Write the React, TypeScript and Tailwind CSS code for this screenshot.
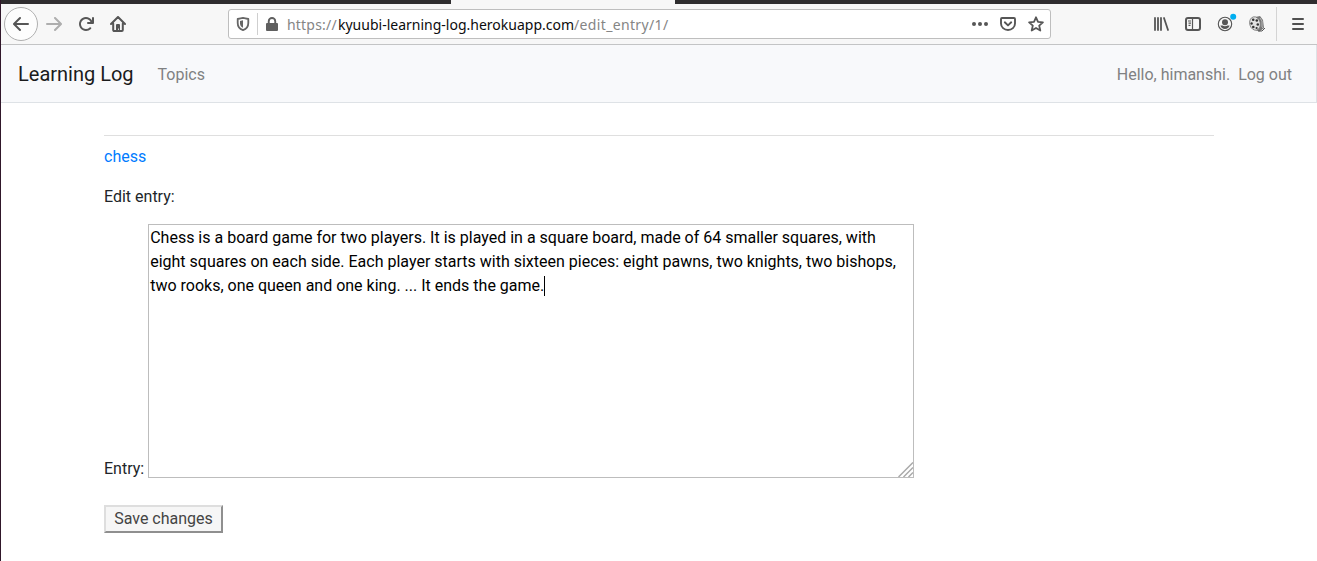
import type { ReactNode } from "react";

function Icon({ children, className = "" }: { children: ReactNode; className?: string }) {
  return (
    <svg viewBox="0 0 16 16" className={`size-4 shrink-0 fill-[#565656] ${className}`}>
      {children}
    </svg>
  );
}

const ARROW =
  "M15 7H3.414l4.293-4.293a1 1 0 0 0-1.414-1.414l-6 6a1 1 0 0 0 0 1.414l6 6a1 1 0 0 0 1.414-1.414L3.414 9H15a1 1 0 0 0 0-2z";

function AddressBar() {
  return (
    <div className="flex h-[30px] w-[823px] shrink-0 items-center rounded-[3px] border border-[#bebebe] bg-white">
      <Icon className="ml-[6px]">
        <path
          d="M8 1.9C6.2 2.2 4.400 2.600 2.700 3V7c0 3.700 2 6 5.300 7.200C11.300 13 13.300 10.700 13.300 7V3C11.600 2.600 9.800 2.200 8 1.900z"
          fill="none"
          stroke="#666"
          strokeWidth="1.800"
          strokeLinejoin="round"
        />
        <path d="M8 4.300 5 5v2.200c0 2 1 3.600 3 4.600z" fill="#666" />
      </Icon>
      <div className="ml-[6px] h-[22px] w-px bg-[#cfcfcf]" />
      <Icon className="ml-[6px]">
        <path
          fillRule="evenodd"
          fill="#5f5f5f"
          d="M3.800 7V5.200a4.200 4.200 0 0 1 8.400 0V7h.8a1 1 0 0 1 1 1v6a1 1 0 0 1-1 1H3a1 1 0 0 1-1-1V8a1 1 0 0 1 1-1zM5.700 7h4.600V5.200a2.300 2.300 0 0 0-4.600 0z"
        />
      </Icon>
      <div className="ml-[7px] flex whitespace-pre pt-[2px] font-['Noto_Sans','Open_Sans',sans-serif] text-[14px] leading-5 text-[#858585]">
        <span className="w-[51px] tracking-[0.2px]">https://</span>
        <span className="w-[236px] text-[#0c0c0d]">kyuubi-learning-log.herokuapp.com</span>
        <span className="tracking-[0.35px]">/edit_entry/1/</span>
      </div>
      <div className="mr-[6px] ml-auto flex gap-3">
        <Icon>
          <circle cx="2" cy="8" r="2" />
          <circle cx="8" cy="8" r="2" />
          <circle cx="14" cy="8" r="2" />
        </Icon>
        <Icon>
          <path
            d="M2 2h12a1 1 0 0 1 1 1v4.500a7 6.500 0 0 1-14 0V3a1 1 0 0 1 1-1zM4.800 6.300 8 9.400l3.200-3.100"
            fill="none"
            stroke="#565656"
            strokeWidth="1.900"
            strokeLinecap="round"
            strokeLinejoin="round"
          />
        </Icon>
        <Icon>
          <path
            d="m8 1.300 2 4.500 4.900.5-3.700 3.300 1.100 4.900L8 12l-4.300 2.500 1.100-4.900L1.100 6.300 6 5.800z"
            fill="none"
            stroke="#565656"
            strokeWidth="1.800"
            strokeLinejoin="round"
          />
        </Icon>
      </div>
    </div>
  );
}

function BrowserToolbar() {
  return (
    <>
      <div className="flex h-1 bg-[#2f2d2f]">
        <div className="ml-[450px] w-[224px] bg-[#f7f7f7]" />
      </div>
      <div className="flex h-[41px] items-center border-b border-[#c3c4c5] bg-[#f7f7f7]">
        <div className="ml-[3px] flex size-[34px] shrink-0 items-center justify-center rounded-full border border-[#b0b0b0] bg-[#fdfdfd]">
          <Icon><path d={ARROW} /></Icon>
        </div>
        <Icon className="ml-2 opacity-45">
          <path d={ARROW} transform="matrix(-1 0 0 1 16 0)" />
        </Icon>
        <Icon className="ml-4">
          <path d="M15 1a1 1 0 0 0-1 1v2.418A6.995 6.995 0 1 0 8 15a6.954 6.954 0 0 0 4.950-2.050 1 1 0 0 0-1.414-1.414A5.019 5.019 0 1 1 12.549 6H10a1 1 0 0 0 0 2h5a1 1 0 0 0 1-1V2a1 1 0 0 0-1-1z" />
        </Icon>
        <Icon className="ml-4">
          <path
            d="M1 8 8 1l7 7M3.200 7.500V14a1 1 0 0 0 1 1h7.600a1 1 0 0 0 1-1V7.500"
            fill="none"
            stroke="#565656"
            strokeWidth="2"
            strokeLinecap="round"
            strokeLinejoin="round"
          />
          <path d="M6 14.500V9a1 1 0 0 1 1-1h2a1 1 0 0 1 1 1v5.500H8.800v-2H8v2z" />
        </Icon>
        <div className="ml-[102px] flex">
          <AddressBar />
        </div>
        <div className="ml-[102px] flex items-center gap-4">
          <Icon>
            <path d="M2 2v12M5 2v12M8 2v12M11 2l4 12" fill="none" stroke="#565656" strokeWidth="1.800" strokeLinecap="round" />
          </Icon>
          <Icon>
            <rect x="1" y="2" width="14" height="12" rx="2" fill="none" stroke="#565656" strokeWidth="2" />
            <path d="M7.500 2v12M3 5h3M3.500 7.200H6M3.500 9.400H5.500" fill="none" stroke="#565656" strokeWidth="1.200" />
          </Icon>
          <svg viewBox="0 0 16 16" className="size-4 shrink-0 overflow-visible fill-[#565656]">
            <circle cx="8" cy="8" r="6.700" fill="none" stroke="#565656" strokeWidth="1.100" />
            <circle cx="8" cy="6.200" r="3" />
            <path d="M3.400 9.500h2.200q2.400 1.300 4.800 0h2.200c-.6 2.200-2.300 3.600-4.600 3.600s-4-1.400-4.600-3.600z" />
            <circle cx="16.200" cy="0.800" r="3" fill="#00aef0" />
          </svg>
          <Icon>
            <path d="M4 1.500 11 0l3 4 1 8-4.500 3.500-6-2z" fill="#777" />
            <ellipse cx="6" cy="7.500" rx="5.300" ry="6.800" fill="#e2e2e2" stroke="#777" strokeWidth="0.800" transform="rotate(-15 6 7.500)" />
            <g fill="#343434">
              <circle cx="4.200" cy="3.800" r="1.300" />
              <circle cx="7.800" cy="4.500" r="1.300" />
              <circle cx="2.600" cy="7.500" r="1.200" />
              <circle cx="8.800" cy="8.500" r="1.300" />
              <circle cx="4.300" cy="11" r="1.300" />
              <circle cx="7.600" cy="12" r="1.100" />
            </g>
            <path d="m11 2 2 3v6l2 2" fill="none" stroke="#bbb" />
            <path d="M9 15h4l3-3" fill="none" stroke="#555" />
          </Icon>
        </div>
        <div className="ml-[11px] h-[34px] w-px bg-[#d4d4d4]" />
        <Icon className="ml-[13px]">
          <path d="M3 3h10M3 8h10M3 13h10" stroke="#505050" strokeWidth="2" strokeLinecap="round" />
        </Icon>
      </div>
    </>
  );
}

const ENTRY_LINES = [
  "Chess is a board game for two players. It is played in a square board, made of 64 smaller squares, with",
  "eight squares on each side. Each player starts with sixteen pieces: eight pawns, two knights, two bishops,",
  "two rooks, one queen and one king. ... It ends the game.",
];

export default function App() {
  return (
    <div className="h-[561px] overflow-hidden border-l border-[#30172a] bg-white font-[Roboto,sans-serif] text-base leading-6 text-[#212529]">
      <BrowserToolbar />
      <nav className="flex h-[58px] items-center border-r border-b border-[#dee2e6] bg-[#f8f9fb] pt-px pr-6 pl-[17px] text-[#808182]">
        <a className="text-xl leading-[30px] text-[#1a1b1c]">Learning Log</a>
        <a className="ml-6 pt-px">Topics</a>
        <span className="ml-auto pt-px">Hello, himanshi.</span>
        <a className="ml-2 pt-px">Log out</a>
      </nav>
      <main className="ml-[103px] w-[1110px] pt-8">
        <div className="border-t border-[#dfdfdf] pt-[9px]">
          <a className="block text-[#007bff]">chess</a>
        </div>
        <p className="mt-4">Edit entry:</p>
        <div className="mt-[15px] flex items-end gap-1">
          <label className="mb-[-3px]">Entry:</label>
          <div className="relative h-[254px] w-[766px] border border-[#bdbdbd] bg-white px-px pt-px text-black">
            {ENTRY_LINES.map((line, i) => (
              <div key={line} className="flex whitespace-pre">
                {line}
                {i === 2 && <span className="mt-[2px] h-5 w-px bg-black" />}
              </div>
            ))}
            <svg viewBox="0 0 15 15" className="absolute right-0 bottom-0 size-[15px]">
              <path d="M.5 15 15 .5M5.500 15 15 5.500M10.500 15l4.500-4.500" fill="none" stroke="#aaa" strokeWidth="1.500" />
            </svg>
          </div>
        </div>
        <button className="mt-[27px] block h-7 w-[119px] border-2 border-t-[#dedede] border-r-[#8f8f8f] border-b-[#8f8f8f] border-l-[#dedede] bg-[#f6f6f6] text-center leading-6 text-[#444]">
          Save changes
        </button>
      </main>
    </div>
  );
}
